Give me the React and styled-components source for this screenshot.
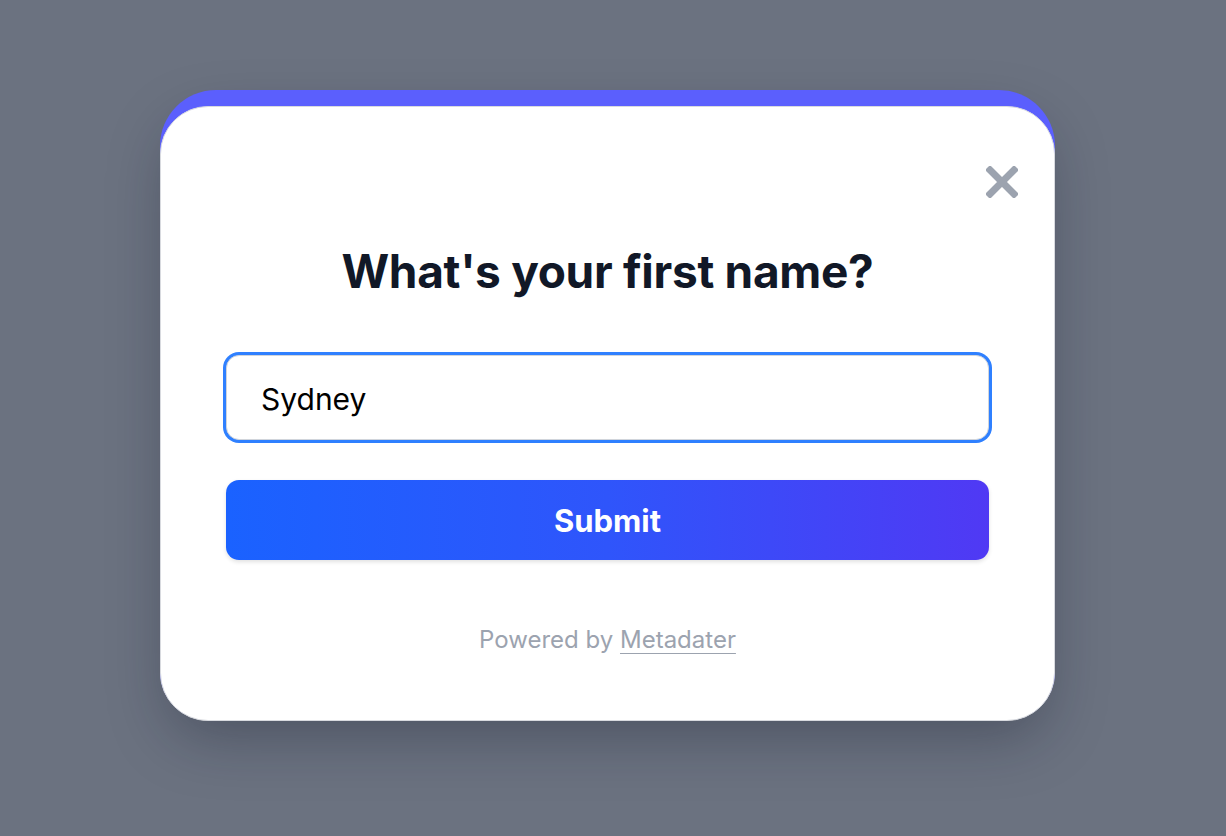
import React from "react";
import styled, { createGlobalStyle } from "styled-components";

const Global = createGlobalStyle`
  html, body { margin: 0; padding: 0; }
  body {
    background: #6b7280;
    font-family: Inter, "Noto Sans", sans-serif;
    -webkit-font-smoothing: antialiased;
  }
`;

const Page = styled.div`
  width: 1226px;
  height: 836px;
  display: flex;
  justify-content: center;
  padding: 90px 11px 0 0;
  box-sizing: border-box;
`;

const Frame = styled.div`
  width: 895px;
  height: 630px;
  background: #5b5ffd;
  border-radius: 56px 56px 48px 48px;
  padding-top: 16px;
  box-sizing: border-box;
  box-shadow: 0 25px 60px -10px rgba(17, 24, 39, 0.35);
  display: flex;
`;

const Card = styled.div`
  position: relative;
  flex: 1;
  background: #ffffff;
  border: 1px solid #d8dadf;
  border-radius: 48px;
  margin: 0 0 -1px;
  padding: 137px 65px 0;
  box-sizing: border-box;
  display: flex;
  flex-direction: column;
  align-items: stretch;
`;

const Close = styled.button`
  position: absolute;
  top: 59px;
  right: 36px;
  width: 32px;
  height: 32px;
  padding: 0;
  border: none;
  background: none;
  cursor: pointer;
  display: flex;
  align-items: center;
  justify-content: center;
`;

const Heading = styled.h1`
  margin: 0;
  text-align: center;
  font-family: Inter, sans-serif;
  font-weight: 700;
  font-size: 46px;
  line-height: 54px;
  letter-spacing: -0.3px;
  color: #111827;
`;

const Input = styled.input`
  margin-top: 57px;
  height: 85px;
  box-sizing: border-box;
  border: 1px solid #d1d5db;
  border-radius: 13px;
  box-shadow: 0 0 0 3px #2f80ff;
  padding: 2px 34px 0;
  font-family: Inter, sans-serif;
  font-size: 30px;
  color: #000;
  outline: none;
  background: #fff;
`;

const SubmitButton = styled.button`
  margin-top: 40px;
  height: 80px;
  border: none;
  border-radius: 13px;
  background: linear-gradient(90deg, #1a62ff 0%, #2f55fb 50%, #5039f4 100%);
  color: #fff;
  font-family: Inter, sans-serif;
  font-weight: 700;
  font-size: 31px;
  box-shadow: 0 2px 4px rgba(0, 0, 0, 0.12);
  cursor: pointer;
`;

const Footer = styled.p`
  margin: 65px 0 0;
  text-align: center;
  font-family: Inter, sans-serif;
  font-size: 24px;
  line-height: 30px;
  color: #9ca3af;
`;

const FooterLink = styled.a`
  color: #9ca3af;
  text-decoration: underline;
  text-decoration-thickness: 1px;
  text-underline-offset: 5px;
`;

export default function App() {
  return (
    <>
      <Global />
      <Page>
        <Frame>
          <Card>
            <Close aria-label="Close">
              <svg width="32" height="32" viewBox="0 0 32 32">
                <path
                  d="M4 4 L28 28 M28 4 L4 28"
                  stroke="#9ca3af"
                  strokeWidth="7"
                  strokeLinecap="square"
                  fill="none"
                />
              </svg>
            </Close>
            <Heading>What's your first name?</Heading>
            <Input defaultValue="Sydney" />
            <SubmitButton>Submit</SubmitButton>
            <Footer>
              Powered by <FooterLink href="#">Metadater</FooterLink>
            </Footer>
          </Card>
        </Frame>
      </Page>
    </>
  );
}
